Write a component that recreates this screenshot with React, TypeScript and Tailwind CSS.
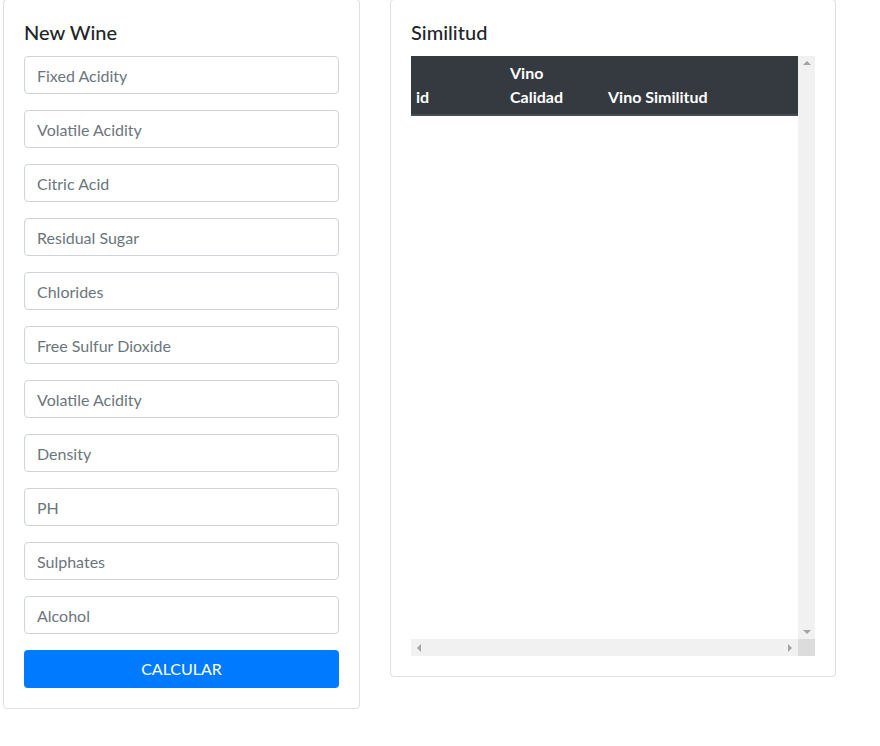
import React from "react";

const fields = [
  "Fixed Acidity",
  "Volatile Acidity",
  "Citric Acid",
  "Residual Sugar",
  "Chlorides",
  "Free Sulfur Dioxide",
  "Volatile Acidity",
  "Density",
  "PH",
  "Sulphates",
  "Alcohol",
];

const font = { fontFamily: 'Lato, "Noto Sans", "Liberation Sans", sans-serif' };

export default function App() {
  return (
    <div className="bg-white min-h-[746px] text-[#212529]" style={font}>
      <div className="flex items-start gap-[30px] pl-[3px] -mt-px">
        <div className="w-[357px] border border-[#dfdfdf] rounded-[4px] bg-white p-5">
          <h5 className="text-[20px] leading-[24px] font-medium mb-3">New Wine</h5>
          <div className="flex flex-col gap-4">
            {fields.map((f, i) => (
              <input
                key={i}
                placeholder={f}
                className="h-[38px] w-full border border-[#ced4da] rounded-[4px] px-3 text-[16px] text-[#495057] placeholder:text-[#6c757d] outline-none"
              />
            ))}
            <button className="h-[38px] w-full rounded-[4px] bg-[#007bff] text-white text-[16px]">
              CALCULAR
            </button>
          </div>
        </div>
        <div className="w-[446px] border border-[#dfdfdf] rounded-[4px] bg-white p-5">
          <h5 className="text-[20px] leading-[24px] font-medium mb-3">Similitud</h5>
          <div className="w-[404px] flex flex-col">
            <div className="flex h-[583px]">
              <div className="w-[387px] overflow-hidden">
                <div className="bg-[#343a40] border-b-2 border-[#454d55] text-white font-bold text-[16px] leading-[24px] flex items-end py-[5px]">
                  <div className="w-[94px] px-[5px]">id</div>
                  <div className="w-[98px] px-[5px]">Vino<br />Calidad</div>
                  <div className="flex-1 px-[5px]">Vino Similitud</div>
                </div>
              </div>
              <div className="w-[17px] bg-[#f1f1f1] flex flex-col justify-between items-center py-[5px]">
                <svg width="8" height="5" viewBox="0 0 8 5"><path d="M4 0 L8 4 L0 4 Z" fill="#a3a3a3" /></svg>
                <svg width="8" height="5" viewBox="0 0 8 5"><path d="M0 1 L8 1 L4 5 Z" fill="#a3a3a3" /></svg>
              </div>
            </div>
            <div className="flex h-[17px]">
              <div className="w-[387px] bg-[#f1f1f1] flex justify-between items-center px-[6px]">
                <svg width="5" height="8" viewBox="0 0 5 8"><path d="M0 4 L4 0 L4 8 Z" fill="#a3a3a3" /></svg>
                <svg width="5" height="8" viewBox="0 0 5 8"><path d="M1 0 L5 4 L1 8 Z" fill="#a3a3a3" /></svg>
              </div>
              <div className="w-[17px] bg-[#dcdcdc]" />
            </div>
          </div>
        </div>
      </div>
    </div>
  );
}
